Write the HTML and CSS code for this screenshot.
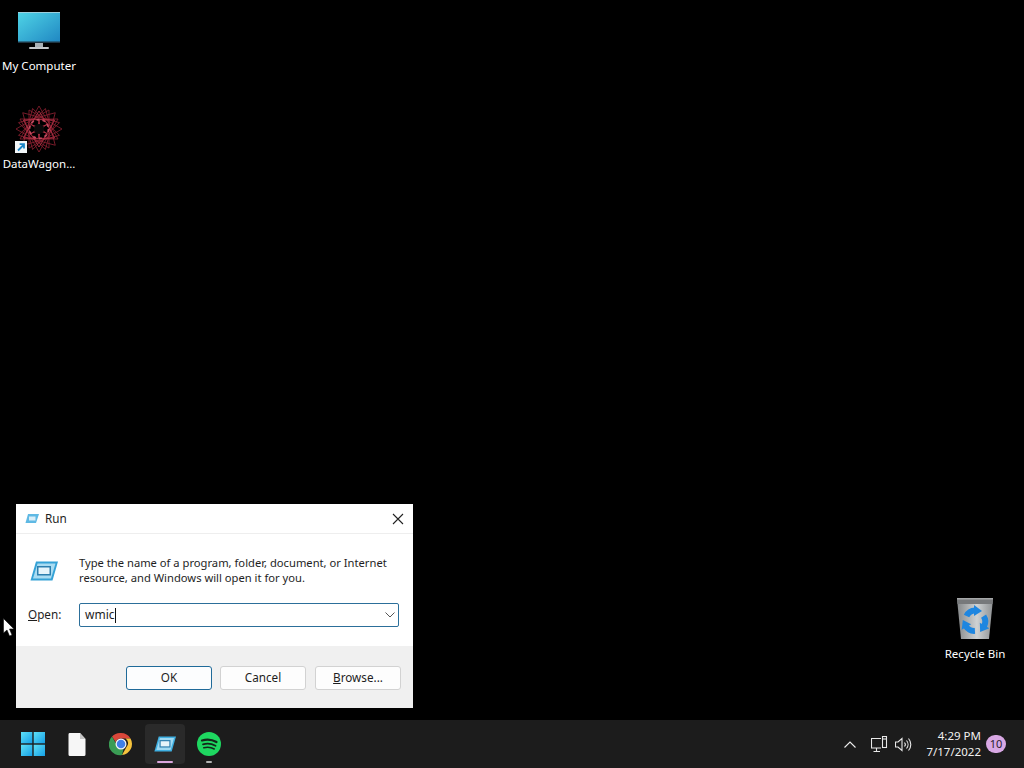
FILE: index.html
```html
<!DOCTYPE html>
<html lang="en">
<head>
    <meta charset="UTF-8">
    <meta name="viewport" content="width=device-width, initial-scale=1.0">
    <title>Run</title>
    <link rel="stylesheet" href="styles.css">
</head>
<body>
    <div class="screen">
        <div class="desktop">
            <div class="desk-icon icon-computer">
                <svg width="44" height="40" viewBox="0 0 44 40">
                    <defs>
                        <linearGradient id="monitorFill" x1="0" y1="0" x2="1" y2="1">
                            <stop offset="0" stop-color="#4fd4e6"/>
                            <stop offset="1" stop-color="#1f86c2"/>
                        </linearGradient>
                    </defs>
                    <rect x="18" y="31" width="8" height="5" fill="#a8b0b5"/>
                    <rect x="12" y="35" width="20" height="2" rx="1" fill="#c4c8cb"/>
                    <rect x="1" y="0" width="42" height="31" fill="url(#monitorFill)"/>
                    <rect x="1" y="0" width="42" height="1" fill="#9ccfdd"/>
                    <rect x="1" y="29.5" width="42" height="1.5" fill="#1e3442"/>
                </svg>
                <span class="desk-label">My Computer</span>
            </div>

            <div class="desk-icon icon-wagon">
                <svg width="48" height="48" viewBox="0 0 48 48">
                    <defs>
                        <polygon id="wagonTri" points="24,1 43,34 5,34"/>
                        <polygon id="wagonKite" points="24,6 32,19 24,26 16,19"/>
                    </defs>
                    <g fill="none" stroke="#8a2030" stroke-width="0.8">
                        <use href="#wagonTri"/>
                        <use href="#wagonTri" transform="rotate(45 24 24)"/>
                        <use href="#wagonTri" transform="rotate(90 24 24)"/>
                        <use href="#wagonTri" transform="rotate(135 24 24)"/>
                        <use href="#wagonTri" transform="rotate(180 24 24)"/>
                        <use href="#wagonTri" transform="rotate(225 24 24)"/>
                        <use href="#wagonTri" transform="rotate(270 24 24)"/>
                        <use href="#wagonTri" transform="rotate(315 24 24)"/>
                    </g>
                    <g fill="none" stroke="#b83348" stroke-width="0.8">
                        <use href="#wagonKite"/>
                        <use href="#wagonKite" transform="rotate(60 24 24)"/>
                        <use href="#wagonKite" transform="rotate(120 24 24)"/>
                        <use href="#wagonKite" transform="rotate(180 24 24)"/>
                        <use href="#wagonKite" transform="rotate(240 24 24)"/>
                        <use href="#wagonKite" transform="rotate(300 24 24)"/>
                    </g>
                    <circle cx="24" cy="24" r="9.500" fill="none" stroke="#c04a5e" stroke-width="1.800" stroke-dasharray="3 3"/>
                    <circle cx="24" cy="24" r="5" fill="#0a0a0a"/>
                </svg>
                <span class="shortcut">
                    <svg width="12" height="12" viewBox="0 0 12 12">
                        <rect width="12" height="12" fill="#f2f6f8"/>
                        <path d="M3 9.500 8.500 4M4.600 3.200H9V7.600" fill="none" stroke="#1c86c8" stroke-width="1.800"/>
                    </svg>
                </span>
                <span class="desk-label">DataWagon...</span>
            </div>

            <div class="desk-icon icon-bin">
                <svg width="38" height="44" viewBox="0 0 38 44">
                    <defs>
                        <linearGradient id="binFill" x1="0" y1="0" x2="1" y2="0">
                            <stop offset="0" stop-color="#85888a"/>
                            <stop offset="0.55" stop-color="#cfd2d3"/>
                            <stop offset="1" stop-color="#8f9294"/>
                        </linearGradient>
                        <g id="binArrow">
                            <path d="M10.500 19A10 10 0 0 1 19 13.500" fill="none" stroke="#1e86e0" stroke-width="6"/>
                            <polygon points="18,8 26,14 18,19" fill="#1e86e0"/>
                        </g>
                    </defs>
                    <polygon points="1,2 37,2 33,42 5,42" fill="url(#binFill)"/>
                    <polygon points="1,2 37,2 36.500,7 1.500,7" fill="#77797b"/>
                    <polygon points="1,1 37,1 37,2.500 1,2.500" fill="#a6a8a9"/>
                    <use href="#binArrow"/>
                    <use href="#binArrow" transform="rotate(120 19 24)"/>
                    <use href="#binArrow" transform="rotate(240 19 24)"/>
                </svg>
                <span class="desk-label">Recycle Bin</span>
            </div>

            <div class="run-dialog">
                <div class="title-bar">
                    <svg class="run-small" width="14" height="11" viewBox="0 0 28 20">
                        <polygon points="6,1 28,1 22,19 1,19" fill="#5fb9e4"/>
                        <rect x="8" y="6" width="13" height="8" fill="#d9eef8"/>
                    </svg>
                    <span class="title-text">Run</span>
                    <svg class="close-x" width="12" height="12" viewBox="0 0 12 12">
                        <path d="M1 1 11 11M11 1 1 11" stroke="#222" stroke-width="1.100" fill="none"/>
                    </svg>
                </div>
                <div class="dialog-body">
                    <div class="intro">
                        <svg width="28" height="20" viewBox="0 0 28 20">
                            <polygon points="6,0.500 28,0.500 22.500,19.500 0.500,19.500" fill="#35a2d6"/>
                            <polygon points="7.500,2.500 25.500,2.500 21,17.500 3,17.500" fill="#a9dcf2"/>
                            <rect x="7" y="5" width="14" height="9.500" fill="#2d7fae"/>
                            <rect x="8.500" y="6.500" width="11" height="6.500" fill="#e6f4fa"/>
                        </svg>
                        <p class="intro-text">Type the name of a program, folder, document, or Internet resource, and Windows will open it for you.</p>
                    </div>
                    <div class="open-row">
                        <label class="open-label"><u>O</u>pen:</label>
                        <div class="combo">
                            <span class="combo-value">wmic</span><span class="caret"></span>
                            <svg class="combo-arrow" width="10" height="6" viewBox="0 0 10 6">
                                <path d="M0.500 0.500 5 5 9.500 0.500" fill="none" stroke="#555" stroke-width="1"/>
                            </svg>
                        </div>
                    </div>
                </div>
                <div class="dialog-footer">
                    <button class="btn btn-default">OK</button>
                    <button class="btn">Cancel</button>
                    <button class="btn btn-browse"><u>B</u>rowse...</button>
                </div>
            </div>

            <svg class="pointer" width="12" height="19" viewBox="0 0 12 19">
                <polygon points="0.500,0.500 0.500,15 4,12 6.500,18 9,17 6.500,11 11,11" fill="#fff" stroke="#111" stroke-width="0.600"/>
            </svg>
        </div>

        <div class="taskbar">
            <div class="task-apps">
                <div class="task-item start-item">
                    <svg width="24" height="24" viewBox="0 0 24 24">
                        <defs>
                            <linearGradient id="winFill" x1="0" y1="0" x2="1" y2="1">
                                <stop offset="0" stop-color="#5ee0f6"/>
                                <stop offset="1" stop-color="#159fe6"/>
                            </linearGradient>
                        </defs>
                        <rect x="0" y="0" width="11.300" height="11.300" fill="url(#winFill)"/>
                        <rect x="12.700" y="0" width="11.300" height="11.300" fill="url(#winFill)"/>
                        <rect x="0" y="12.700" width="11.300" height="11.300" fill="url(#winFill)"/>
                        <rect x="12.700" y="12.700" width="11.300" height="11.300" fill="url(#winFill)"/>
                    </svg>
                </div>
                <div class="task-item">
                    <svg width="18" height="23" viewBox="0 0 18 23">
                        <path d="M1.500 0H12L17.500 6V21.500A1.500 1.500 0 0 1 16 23H2A1.500 1.500 0 0 1 .5 21.500V1.500A1.500 1.500 0 0 1 1.500 0Z" fill="#f6f6f6"/>
                        <path d="M12 0 17.500 6H12Z" fill="#c4c4c4"/>
                    </svg>
                </div>
                <div class="task-item">
                    <svg width="24" height="24" viewBox="0 0 48 48">
                        <path d="M24 2A22 22 0 0 1 43 13H24A11 11 0 0 0 13.500 20.500L6 9A22 22 0 0 1 24 2Z" fill="#d9473a"/>
                        <path d="M43 13A22 22 0 0 1 26 46L35 30A11 11 0 0 0 33 13Z" fill="#f6c33c"/>
                        <path d="M26 46A22 22 0 0 1 6 9L15.500 26A11 11 0 0 0 29 34Z" fill="#3a9c54"/>
                        <circle cx="24" cy="24" r="11" fill="#f4f4f4"/>
                        <circle cx="24" cy="24" r="8.500" fill="#3f7fe8"/>
                    </svg>
                </div>
                <div class="task-item task-active">
                    <svg width="22" height="16" viewBox="0 0 28 20">
                        <polygon points="6,0.500 28,0.500 22.500,19.500 0.500,19.500" fill="#3fb0e2"/>
                        <polygon points="7.500,2.500 25.500,2.500 21,17.500 3,17.500" fill="#9fd9f2"/>
                        <rect x="7" y="5" width="14" height="9.500" fill="#2d7fae"/>
                        <rect x="8.500" y="6.500" width="11" height="6.500" fill="#e6f4fa"/>
                    </svg>
                    <span class="indicator indicator-wide"></span>
                </div>
                <div class="task-item">
                    <svg width="24" height="24" viewBox="0 0 24 24">
                        <circle cx="12" cy="12" r="12" fill="#1ed760"/>
                        <g fill="none" stroke="#14261b" stroke-linecap="round">
                            <path d="M5 8.500C10 7 15 7.500 19.500 10" stroke-width="2.200"/>
                            <path d="M6 12.300C10.500 11 14.500 11.500 18.500 13.700" stroke-width="1.800"/>
                            <path d="M6.800 15.800C10.500 14.800 14 15.200 17.300 17" stroke-width="1.500"/>
                        </g>
                    </svg>
                    <span class="indicator"></span>
                </div>
            </div>
            <div class="tray">
                <svg class="tray-chevron" width="12" height="7" viewBox="0 0 12 7">
                    <path d="M0.500 6.500 6 1 11.500 6.500" fill="none" stroke="#eee" stroke-width="1.100"/>
                </svg>
                <svg class="tray-net" width="17" height="16" viewBox="0 0 17 16">
                    <g fill="none" stroke="#e8e8e8" stroke-width="1.100">
                        <path d="M10 2.500H.5V12H10"/>
                        <path d="M5.500 12V15M2.500 15.500H9"/>
                        <rect x="11.500" y=".5" width="4" height="11"/>
                        <path d="M11.500 3H15.500"/>
                    </g>
                </svg>
                <svg class="tray-sound" width="17" height="15" viewBox="0 0 17 15">
                    <g fill="none" stroke="#e8e8e8" stroke-width="1.100">
                        <path d="M.5 5V10H3L7 13.500V1.500L3 5Z"/>
                        <path d="M9.500 5.500A3 3 0 0 1 9.500 9.500"/>
                        <path d="M11.500 3.500A6 6 0 0 1 11.500 11.500"/>
                        <path d="M13.500 1.500A9 9 0 0 1 13.500 13.500"/>
                    </g>
                </svg>
                <div class="clock">
                    <span>4:29 PM</span>
                    <span>7/17/2022</span>
                </div>
                <span class="notify-badge">10</span>
            </div>
        </div>
    </div>
</body>
</html>
```

FILE: styles.css
```css
html, body {
    margin: 0;
    padding: 0;
    background-color: #000;
}
.screen {
    width: 1024px;
    height: 768px;
    display: flex;
    flex-direction: column;
    overflow: hidden;
    font-family: "Noto Sans", "Open Sans", sans-serif;
    font-size: 11.7px;
}
.desktop {
    position: relative;
    flex: 1;
    background-color: #000;
}

/* desktop icons sit on a free canvas */
.desk-icon {
    position: absolute;
    width: 78px;
    display: flex;
    flex-direction: column;
    align-items: center;
}
.icon-computer {
    left: 0;
    top: 12px;
}
.icon-wagon {
    left: 0;
    top: 105px;
}
.icon-bin {
    left: 936px;
    top: 597px;
}
.desk-label {
    color: #fff;
    font-size: 11.5px;
    line-height: 16px;
    margin-top: 6px;
    white-space: nowrap;
}
.icon-wagon .desk-label {
    margin-top: 3px;
}
.icon-bin .desk-label {
    margin-top: 5px;
}
.shortcut {
    position: absolute;
    left: 15px;
    top: 35px;
    height: 12px;
}

/* run dialog */
.run-dialog {
    position: absolute;
    left: 16px;
    top: 504px;
    width: 397px;
    height: 204px;
    display: flex;
    flex-direction: column;
    background-color: #fff;
    color: #1e1e1e;
}
.title-bar {
    height: 29px;
    display: flex;
    align-items: center;
    padding: 0 9px;
    border-bottom: 1px solid #eeeeee;
    flex-shrink: 0;
}
.run-small {
    margin-right: 6px;
}
.title-text {
    flex: 1;
    padding-bottom: 2px;
}
.close-x {
    margin-right: 0;
}
.dialog-body {
    flex: 1;
    padding: 21px 14px 0 12px;
}
.intro {
    display: flex;
    align-items: flex-start;
    padding-left: 2px;
    height: 48px;
}
.intro svg {
    margin-top: 6px;
    margin-right: 21px;
    flex-shrink: 0;
}
.intro-text {
    margin: 0;
    font-size: 11.2px;
    line-height: 15px;
    width: 312px;
}
.open-row {
    display: flex;
    align-items: center;
}
.open-label {
    width: 51px;
    line-height: 22px;
    padding-bottom: 2px;
}
.combo {
    flex: 1;
    height: 24px;
    display: flex;
    align-items: center;
    border: 1px solid #2c6f9a;
    border-radius: 2px;
    padding: 0 3px 0 5px;
    box-sizing: border-box;
}
.combo-value {
    font-size: 12px;
    line-height: 16px;
    margin-top: -1px;
}
.caret {
    width: 1px;
    height: 15px;
    background-color: #111;
}
.combo-arrow {
    margin-left: auto;
}
.dialog-footer {
    height: 62px;
    flex-shrink: 0;
    display: flex;
    justify-content: flex-end;
    gap: 8px;
    padding: 20px 12px 0 0;
    box-sizing: border-box;
    background-color: #f0f0f0;
}
.btn {
    width: 86px;
    height: 24px;
    padding: 0 0 2px;
    font-family: inherit;
    font-size: 11.7px;
    color: #1e1e1e;
    background-color: #fdfdfd;
    border: 1px solid #d2d2d2;
    border-radius: 3px;
}
.btn-default {
    border-color: #1f6a99;
    background-color: #fcfdfe;
}
.btn-browse {
    margin-left: 1px;
}
.pointer {
    position: absolute;
    left: 3px;
    top: 618px;
}

/* taskbar */
.taskbar {
    height: 48px;
    flex-shrink: 0;
    display: flex;
    justify-content: space-between;
    align-items: center;
    background-color: #1c1c1c;
}
.task-apps {
    display: flex;
    align-items: center;
    padding-left: 13px;
    gap: 4px;
}
.task-item {
    position: relative;
    width: 40px;
    height: 40px;
    display: flex;
    align-items: center;
    justify-content: center;
    border-radius: 4px;
}
.task-active {
    background-color: #2a2a2a;
}
.indicator {
    position: absolute;
    bottom: 1px;
    left: 17px;
    width: 6px;
    height: 2px;
    border-radius: 1px;
    background-color: #b4b4b4;
}
.indicator-wide {
    left: 12px;
    width: 16px;
    background-color: #dba6dd;
}
.tray {
    display: flex;
    align-items: center;
    color: #f0f0f0;
    padding-right: 18px;
}
.tray-chevron {
    margin-right: 15px;
}
.tray-net {
    margin-right: 7px;
}
.clock {
    display: flex;
    flex-direction: column;
    align-items: flex-end;
    margin-left: 14px;
    font-size: 11.5px;
    line-height: 16px;
}
.notify-badge {
    width: 20px;
    height: 18px;
    margin-left: 5px;
    border-radius: 9px;
    background-color: #d8a8e4;
    color: #2a1c2e;
    font-size: 11px;
    line-height: 18px;
    text-align: center;
}
```
